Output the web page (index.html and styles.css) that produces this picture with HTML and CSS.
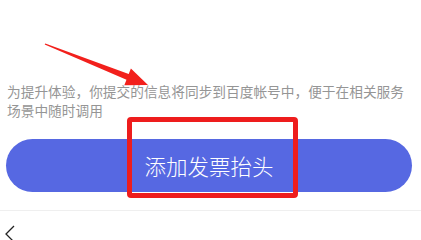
FILE: index.html
```html
<!DOCTYPE html>
<html lang="zh">
<head>
<meta charset="utf-8">
<link rel="stylesheet" href="styles.css">
</head>
<body>
<div class="page">
  <p class="note">为提升体验，你提交的信息将同步到百度帐号中，便于在相关服务场景中随时调用</p>
  <div class="action">
    <button class="add-btn">添加发票抬头</button>
  </div>
  <nav class="navbar">
    <svg class="back" width="12" height="20" viewBox="0 0 12 20"><polyline points="10,1 2,9 10,17" fill="none" stroke="#222" stroke-width="1.3"/></svg>
  </nav>
  <svg class="anno-arrow" width="421" height="240" viewBox="0 0 421 240"><polygon points="45.3,43.4 128.7,74.1 130.9,68.5 148,85 124.3,85.3 126.5,79.7 44.7,44.6" fill="#f2201c"/></svg>
  <div class="anno-box"></div>
</div>
</body>
</html>
```
FILE: styles.css
```css
html, body {
  margin: 0;
  padding: 0;
  background: #ffffff;
}
.page {
  position: relative;
  width: 421px;
  height: 240px;
  overflow: hidden;
  font-family: "Noto Sans CJK SC", "Noto Sans", sans-serif;
}
.note {
  margin: 0;
  padding: 82px 7px 0 7px;
  font-size: 13.7px;
  line-height: 19px;
  color: #959595;
}
.action {
  padding: 19px 9px 0 6px;
}
.add-btn {
  display: flex;
  align-items: center;
  justify-content: center;
  width: 100%;
  height: 53px;
  border: none;
  border-radius: 27px;
  background: #5668e2;
  color: #ffffff;
  font-family: "Noto Sans CJK SC", sans-serif;
  font-size: 21.5px;
  font-weight: 300;
  padding: 0;
}
.navbar {
  margin-top: 18px;
  border-top: 1px solid #efefef;
  padding: 14px 0 0 4px;
  height: 40px;
}
.back {
  display: block;
}
.anno-arrow {
  position: absolute;
  left: 0;
  top: 0;
  pointer-events: none;
}
.anno-box {
  position: absolute;
  left: 127px;
  top: 117px;
  width: 171px;
  height: 81px;
  box-sizing: border-box;
  border: 5px solid #ee1d1d;
  border-radius: 4px;
}
```
